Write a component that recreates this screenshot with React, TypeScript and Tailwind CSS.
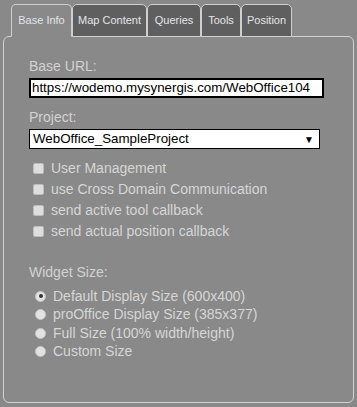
import React from "react";

const tabs = [
  { label: "Base Info", w: "w-[61px]", active: true },
  { label: "Map Content", w: "w-[75px]", active: false },
  { label: "Queries", w: "w-[54px]", active: false },
  { label: "Tools", w: "w-[40px]", active: false },
  { label: "Position", w: "w-[51px]", active: false },
];

const checks = [
  "User Management",
  "use Cross Domain Communication",
  "send active tool callback",
  "send actual position callback",
];

const radios = [
  "Default Display Size (600x400)",
  "proOffice Display Size (385x377)",
  "Full Size (100% width/height)",
  "Custom Size",
];

export default function App() {
  return (
    <div className="w-[357px] h-[407px] bg-[#898989] pt-[4px] font-['Liberation_Sans',Arial,sans-serif] flex flex-col">
      <div className="flex pl-[11px] h-[33px] relative z-10 -mb-px">
        {tabs.map((t) => (
          <div
            key={t.label}
            className={`${t.w} h-[33px] flex items-center justify-center border border-[#cfcfcf] rounded-t-[5px] text-[11px] text-[#e2e6ea] ${
              t.active ? "bg-[#898989] border-b-[#898989]" : "bg-[#5f5f5f] border-b-[#cfcfcf]"
            }`}
          >
            <span className="-mt-[1px]">{t.label}</span>
          </div>
        ))}
      </div>
      <div className="mx-[3px] h-[367px] border border-[#d2d2d2] rounded-[6px] pl-[25px] pt-[21px] flex flex-col">
        <div className="text-[14px] leading-[16px] text-[#d2d2d2]">Base URL:</div>
        <div className="mt-[4px] w-[295px] h-[20px] bg-white border-2 border-black flex items-center pl-[1px] text-[13.33px] text-black">
          https://wodemo.mysynergis.com/WebOffice104
        </div>
        <div className="mt-[11px] text-[14px] leading-[16px] text-[#d2d2d2]">Project:</div>
        <div className="mt-[4px] w-[291px] h-[20px] bg-white border border-black flex items-center justify-between pl-[3px] pr-[5px] text-[13.33px] text-black">
          <span>WebOffice_SampleProject</span>
          <span className="text-[10px]">▼</span>
        </div>
        <div className="mt-[9px] flex flex-col">
          {checks.map((c) => (
            <div key={c} className="h-[21px] flex items-center pl-[4px]">
              <span className="w-[11px] h-[11px] rounded-[2px] bg-[#dedede] border border-[#bdbdbd]" />
              <span className="ml-[7px] text-[14px] text-[#d6d6d6]">{c}</span>
            </div>
          ))}
        </div>
        <div className="mt-[22px] text-[14px] leading-[16px] text-[#d2d2d2]">Widget Size:</div>
        <div className="mt-[7px] flex flex-col">
          {radios.map((r, i) => (
            <div key={r} className="h-[18.5px] flex items-center pl-[6px]">
              <span className="w-[11px] h-[11px] rounded-full bg-[#e2e2e2] border border-[#c4c4c4] flex items-center justify-center">
                {i === 0 && <span className="w-[4px] h-[4px] rounded-full bg-[#333]" />}
              </span>
              <span className="ml-[7px] text-[14px] text-[#d6d6d6]">{r}</span>
            </div>
          ))}
        </div>
      </div>
    </div>
  );
}
